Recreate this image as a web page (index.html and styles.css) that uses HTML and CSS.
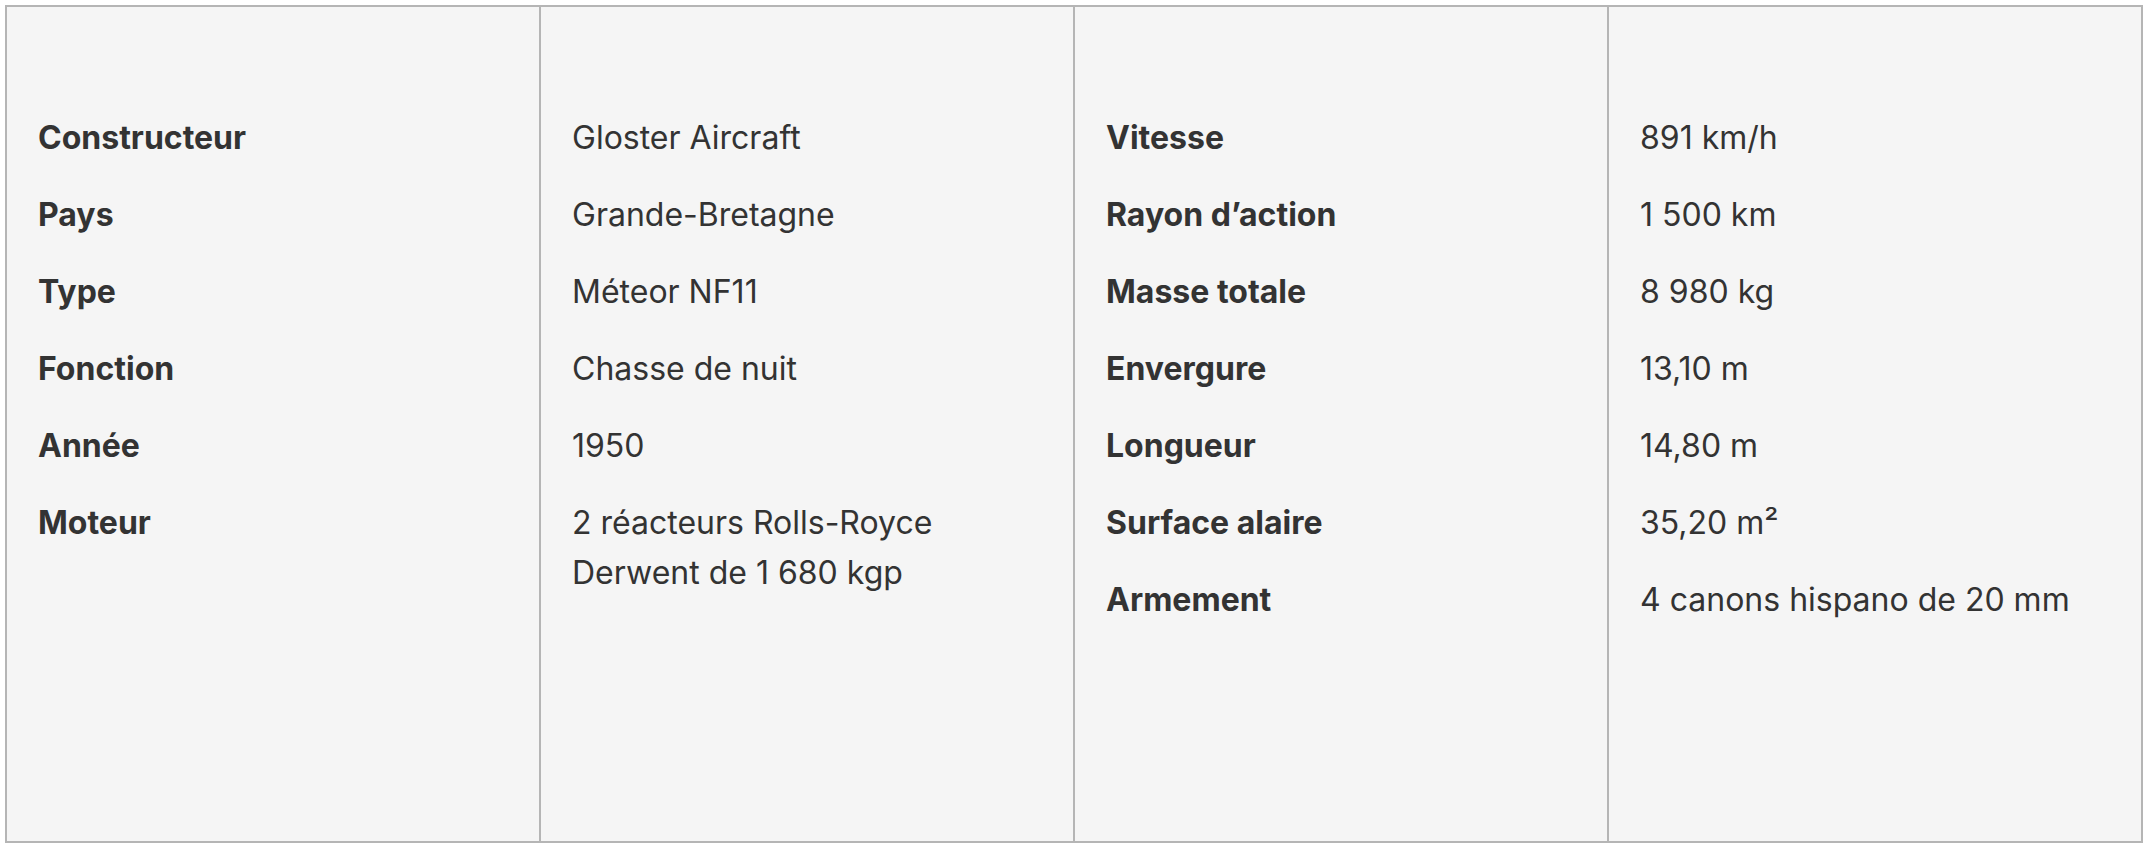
FILE: index.html
```html
<!DOCTYPE html>
<html lang="fr">
<head>
<meta charset="utf-8">
<title>Fiche technique</title>
<link rel="stylesheet" href="styles.css">
</head>
<body>
<div class="specs">
  <dl class="col labels">
    <dt>Constructeur</dt>
    <dt>Pays</dt>
    <dt>Type</dt>
    <dt>Fonction</dt>
    <dt>Année</dt>
    <dt>Moteur</dt>
  </dl>
  <dl class="col values">
    <dd>Gloster Aircraft</dd>
    <dd>Grande-Bretagne</dd>
    <dd>Méteor NF11</dd>
    <dd>Chasse de nuit</dd>
    <dd>1950</dd>
    <dd>2 réacteurs Rolls-Royce<br>Derwent de 1 680 kgp</dd>
  </dl>
  <dl class="col labels">
    <dt>Vitesse</dt>
    <dt>Rayon d’action</dt>
    <dt>Masse totale</dt>
    <dt>Envergure</dt>
    <dt>Longueur</dt>
    <dt>Surface alaire</dt>
    <dt>Armement</dt>
  </dl>
  <dl class="col values">
    <dd>891 km/h</dd>
    <dd>1 500 km</dd>
    <dd>8 980 kg</dd>
    <dd>13,10 m</dd>
    <dd>14,80 m</dd>
    <dd>35,20 m²</dd>
    <dd>4 canons hispano de 20 mm</dd>
  </dl>
</div>
</body>
</html>
```
FILE: styles.css
```css
html, body {
  margin: 0;
  padding: 0;
  background: #ffffff;
}

body {
  padding: 5px 7px 9px 5px;
  font-family: Inter, "Noto Sans", sans-serif;
  color: #333333;
}

.specs {
  display: grid;
  grid-template-columns: repeat(4, 1fr);
  gap: 2px;
  height: 834px;
  border: 2px solid #b5b5b5;
  background: #b5b5b5;
}

.col {
  margin: 0;
  padding: 106px 31px 0 31px;
  background: #f5f5f5;
  display: flex;
  flex-direction: column;
  gap: 27px;
}

.col dt,
.col dd {
  margin: 0;
  font-size: 32px;
  line-height: 50px;
}

.labels dt {
  font-weight: 700;
}

.values dd {
  font-weight: 400;
}
```
